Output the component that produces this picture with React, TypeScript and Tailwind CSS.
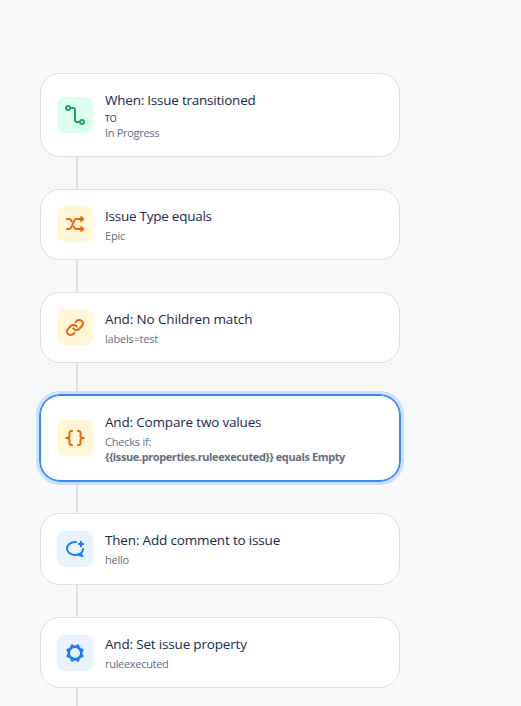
import type { ReactNode } from "react";

function TransitionIcon() {
  return (
    <svg viewBox="0 0 36 36" className="size-9" fill="none" stroke="currentColor" strokeWidth="2" strokeLinecap="round">
      <circle cx="11" cy="11" r="2" />
      <circle cx="25" cy="25" r="2" />
      <path d="M13.500 11H16.500a1.500 1.500 0 0 1 1.500 1.500v11a1.500 1.500 0 0 0 1.500 1.500h3" />
    </svg>
  );
}

function ShuffleIcon() {
  return (
    <svg viewBox="0 0 36 36" className="size-9" fill="none" stroke="currentColor" strokeWidth="2" strokeLinecap="round">
      <path d="M10 23h2.200c.9 0 1.500-.4 1.900-1.300l3.300-7.400c.4-.9 1-1.300 1.900-1.300H25M10 13h2.200c.9 0 1.500.4 1.900 1.300l.5 1.100M17 20.700l.4 1c.4.900 1 1.300 1.900 1.300H25" />
      <path d="M24 10.500 26.700 13 24 15.500zM24 20.500 26.700 23 24 25.500z" fill="currentColor" strokeWidth="1.200" strokeLinejoin="round" />
    </svg>
  );
}

function LinkIcon() {
  return (
    <svg viewBox="0 0 24 24" className="size-6" fill="currentColor">
      <path d="M12.856 5.457l-.937.92a1.002 1.002 0 0 0 0 1.437 1.047 1.047 0 0 0 1.463 0l.984-.966c.967-.95 2.542-1.135 3.602-.288a2.54 2.54 0 0 1 .203 3.81l-2.903 2.852a2.646 2.646 0 0 1-3.696 0l-1.110-1.090L9 13.570l1.108 1.089c1.822 1.788 4.802 1.788 6.622 0l2.905-2.852a4.558 4.558 0 0 0-.357-6.820c-1.893-1.517-4.695-1.226-6.422.470" />
      <path d="M11.144 19.543l.937-.920a1.002 1.002 0 0 0 0-1.437 1.047 1.047 0 0 0-1.462 0l-.985.966c-.967.950-2.542 1.135-3.602.288a2.540 2.540 0 0 1-.203-3.810l2.903-2.852a2.646 2.646 0 0 1 3.696 0l1.110 1.090L15 11.430l-1.108-1.089c-1.822-1.788-4.802-1.788-6.622 0l-2.905 2.852a4.558 4.558 0 0 0 .357 6.820c1.893 1.517 4.695 1.226 6.422-.470" />
    </svg>
  );
}

function BracesIcon() {
  return (
    <svg viewBox="0 0 36 36" className="size-9" fill="none" stroke="currentColor" strokeWidth="2" strokeLinecap="round" strokeLinejoin="round">
      <path d="M15 11h-.500a2 2 0 0 0-2 2v3.200c0 1.100-.8 1.800-3.300 1.800 2.500 0 3.300.7 3.300 1.800V23a2 2 0 0 0 2 2h.500" />
      <path d="M21 11h.500a2 2 0 0 1 2 2v3.200c0 1.100.8 1.800 3.300 1.800-2.500 0-3.300.7-3.300 1.800V23a2 2 0 0 1-2 2h-.500" />
    </svg>
  );
}

function CommentAddIcon() {
  return (
    <svg viewBox="0 0 36 36" className="size-9" fill="none" stroke="currentColor" strokeWidth="2" strokeLinecap="round" strokeLinejoin="round">
      <path d="M19 11h-1c-4.500 0-8 2.900-8 6.500s3.500 6.500 8 6.500c1.700 0 3.300-.4 4.600-1.100M26 18c0 2-1 3.600-2.600 4.800l2 2.200-3.400-1" />
      <path d="M24 10.800v4.400M21.800 13h4.400" />
    </svg>
  );
}

function GearIcon() {
  return (
    <svg viewBox="0 0 36 36" className="size-9" fill="none" stroke="currentColor">
      <circle cx="18" cy="18" r="6.350" strokeWidth="2.600" />
      <g transform="rotate(22.5 18 18)" strokeWidth="3.200" strokeLinecap="round">
        <path d="M18 10.600v-.2M18 25.400v.2M10.600 18h-.2M25.400 18h.2M12.770 12.770l-.15-.15M23.230 12.770l.15-.15M12.770 23.230l-.15.15M23.230 23.230l.15.15" />
      </g>
    </svg>
  );
}

function Tile({ className, children }: { className: string; children: ReactNode }) {
  return <div className={`flex size-9 shrink-0 items-center justify-center rounded-lg ${className}`}>{children}</div>;
}

function Card({ className, tile, children }: { className: string; tile: ReactNode; children: ReactNode }) {
  return (
    <div className={`flex w-[360px] items-center gap-3 rounded-[20px] border bg-white pl-4 ${className}`}>
      {tile}
      <div className="flex flex-col items-start whitespace-nowrap text-[11px] leading-[15px] tracking-[-0.22px] text-[#626f86]">{children}</div>
    </div>
  );
}

function Title({ className, children }: { className: string; children: ReactNode }) {
  return <div className={`text-[13.5px] leading-5 text-[#172b4d] ${className}`}>{children}</div>;
}

function Connector() {
  return <div className="ml-9 h-8 w-0.5 bg-[#dcdfe4]" />;
}

const orange = "bg-[#fff7d6] text-[#e56910]";
const blue = "bg-[#e9f2ff] text-[#1d7afc]";
const plain = "border-[#dcdfe4]";
const selected = "relative border-[#388bff] ring-1 ring-[#388bff] outline-[3px] outline-offset-1 outline-[#cce0ff]";

export default function App() {
  return (
    <main className="h-[706px] w-[521px] overflow-hidden bg-[#f7f8f9] pt-[73px] pl-10 font-['Open_Sans','Noto_Sans',sans-serif]">
      <Card className={`h-[84px] ${plain}`} tile={<Tile className="bg-[#dcfff1] text-[#22a06b]"><TransitionIcon /></Tile>}>
        <Title className="tracking-[-0.23px]">When: Issue transitioned</Title>
        <div className="mt-px text-[9px] leading-[15px] text-[#172b4d]">TO</div>
        <div className="mb-px leading-[14px] tracking-[-0.3px]">In Progress</div>
      </Card>
      <Connector />
      <Card className={`h-[71px] pb-px ${plain}`} tile={<Tile className={orange}><ShuffleIcon /></Tile>}>
        <Title className="tracking-[-0.25px]">Issue Type equals</Title>
        <div className="mt-0.5">Epic</div>
      </Card>
      <Connector />
      <Card className={`h-[71px] pb-px ${plain}`} tile={<Tile className={orange}><LinkIcon /></Tile>}>
        <Title className="tracking-[-0.13px]">And: No Children match</Title>
        <div className="mt-0.5">labels=test</div>
      </Card>
      <Connector />
      <Card className={`h-[86px] ${selected}`} tile={<Tile className={orange}><BracesIcon /></Tile>}>
        <Title className="tracking-[-0.18px]">And: Compare two values</Title>
        <div className="mt-0.5">Checks if:</div>
        <div className="font-bold tracking-[-0.4px]">{"{{issue.properties.ruleexecuted}} equals Empty"}</div>
      </Card>
      <Connector />
      <Card className={`h-[72px] ${plain}`} tile={<Tile className={blue}><CommentAddIcon /></Tile>}>
        <Title className="tracking-[-0.17px]">Then: Add comment to issue</Title>
        <div className="mt-0.5 mb-0.5">hello</div>
      </Card>
      <Connector />
      <Card className={`h-[71px] pt-px ${plain}`} tile={<Tile className={blue}><GearIcon /></Tile>}>
        <Title className="tracking-[-0.18px]">And: Set issue property</Title>
        <div className="mt-0.5 mb-px tracking-[-0.3px]">ruleexecuted</div>
      </Card>
      <Connector />
    </main>
  );
}
